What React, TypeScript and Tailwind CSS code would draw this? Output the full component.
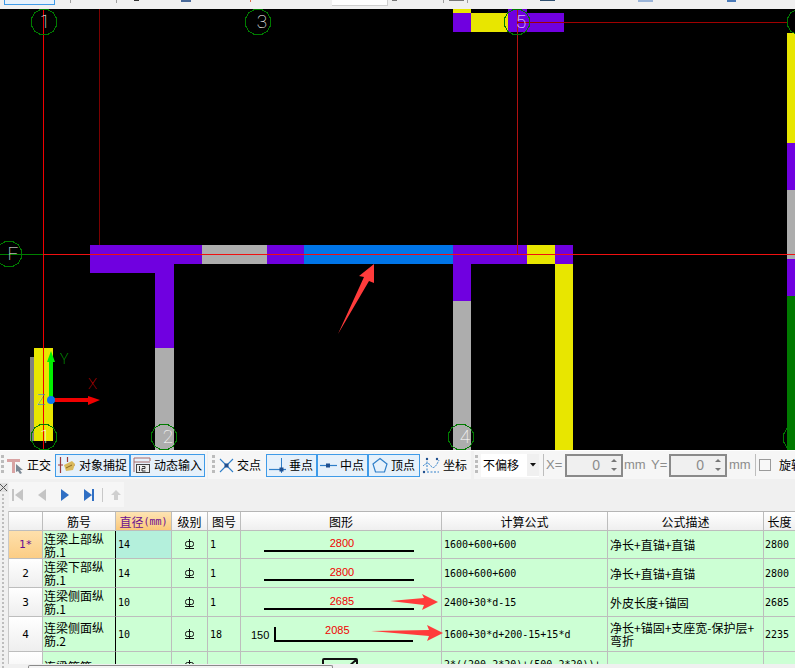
import type { ReactNode } from "react";

const cad = [
  // top beam piece
  [453, 9, 18, 4, "#e8e600"],
  [453, 13, 18, 19, "#7000e0"],
  [471, 13, 37, 19, "#e8e600"],
  [508, 13, 56, 19, "#7000e0"],
  [508, 9, 19, 4, "#7000e0"],
  // main beam
  [90, 245, 112, 19, "#7000e0"],
  [90, 264, 65, 9, "#7000e0"],
  [202, 245, 65, 19, "#adadad"],
  [267, 245, 37, 19, "#7000e0"],
  [304, 245, 149, 19, "#0075e8"],
  [453, 245, 74, 19, "#7000e0"],
  [527, 245, 28, 19, "#e8e600"],
  [555, 245, 18, 19, "#7000e0"],
  // columns
  [155, 264, 19, 84, "#7000e0"],
  [155, 348, 19, 102, "#adadad"],
  [453, 264, 18, 37, "#7000e0"],
  [453, 301, 18, 149, "#adadad"],
  [555, 264, 18, 186, "#e8e600"],
  [30, 357, 4, 84, "#808080"],
  [34, 348, 19, 93, "#e8e600"],
  // right edge
  [787, 33, 8, 110, "#e8e600"],
  [787, 143, 8, 47, "#7000e0"],
  [787, 190, 8, 69, "#adadad"],
  [787, 259, 8, 37, "#7000e0"],
  [787, 296, 8, 154, "#007a00"],
] as const;

const axes = [
  { x: 44, y: 22, label: "1" },
  { x: 258, y: 22, label: "3" },
  { x: 517, y: 22, label: "5" },
  { x: 800, y: 22, label: "" },
  { x: 9, y: 254, label: "F" },
  { x: 44, y: 437, label: "1" },
  { x: 164, y: 437, label: "2" },
  { x: 461, y: 437, label: "4" },
  { x: 796, y: 438, label: "" },
];

function ring(cx: number, cy: number) {
  const pts = [];
  for (let i = 0; i < 12; i++) {
    const a = ((i + 0.5) * Math.PI) / 6;
    pts.push(`${(cx + 13 * Math.cos(a)).toFixed(1)},${(cy + 13 * Math.sin(a)).toFixed(1)}`);
  }
  return pts.join(" ");
}

function CadView() {
  return (
    <svg viewBox="0 9 795 441" className="block w-[795px] h-[441px] bg-black shrink-0">
      <g shapeRendering="crispEdges">
        {cad.map(([x, y, w, h, fill], i) => (
          <rect key={i} x={x} y={y} width={w} height={h} fill={fill} />
        ))}
        <line x1="99.5" y1="9" x2="99.5" y2="245" stroke="#7a0000" />
        <line x1="517.5" y1="9" x2="517.5" y2="254" stroke="#b01010" />
        <line x1="517" y1="22.5" x2="787" y2="22.5" stroke="#a00000" />
        <line x1="43.5" y1="9" x2="43.5" y2="450" stroke="#f00000" />
        <line x1="0" y1="254.5" x2="43" y2="254.5" stroke="#008000" />
        <line x1="43" y1="254.5" x2="795" y2="254.5" stroke="#f01010" />
      </g>
      {axes.map((a) => (
        <g key={`${a.x}-${a.y}`}>
          <polygon points={ring(a.x, a.y)} fill="none" stroke="#007a00" shapeRendering="crispEdges" />
          <text x={a.x + (a.label === "1" ? 1 : 4)} y={a.y + 6} textAnchor="middle" fill="#fff" fontSize="19" className="font-['Roboto'] font-thin">
            {a.label}
          </text>
        </g>
      ))}
      {/* ucs */}
      <rect x="49" y="360" width="4" height="40" fill="#00f000" />
      <polygon points="51,351 55,362 47,362" fill="#00f000" />
      <rect x="51" y="398" width="40" height="4" fill="#f00000" />
      <polygon points="100,400 88,396 88,405" fill="#f00000" />
      <circle cx="51" cy="400" r="4" fill="#0a78f0" />
      <text x="37" y="405" fontSize="14" fill="#0a78f0" className="font-['Roboto'] font-thin">Z</text>
      <text x="60" y="364" fontSize="14" fill="#00f000" className="font-['Roboto'] font-thin">Y</text>
      <text x="88" y="389" fontSize="15" fill="#f00000" className="font-['Roboto'] font-thin">X</text>
      <polygon points="338,334 364,277 359,276 374,264 374,283 369,281" fill="#ff3b3b" />
    </svg>
  );
}

function Gripper() {
  return <div className="w-[3px] h-[20px] shrink-0 bg-[repeating-linear-gradient(to_bottom,#bcbcbc_0,#bcbcbc_3px,transparent_3px,transparent_5px)]" />;
}

function ToolBtn({ active, icon, label, className }: { active?: boolean; icon: ReactNode; label: string; className?: string }) {
  return (
    <div className={`flex items-center h-[23px] shrink-0 ${active ? "border border-[#3f9be8] bg-[#e6f1fb]" : ""} ${className ?? ""}`}>
      {icon}
      <span className="ml-[3px] whitespace-nowrap">{label}</span>
    </div>
  );
}

function Spinner({ className }: { className?: string }) {
  return (
    <div className={`flex items-center justify-end w-[58px] h-[23px] shrink-0 border-2 border-[#8a8a8a] bg-[#f0f0f0] ${className ?? ""}`}>
      <span className="font-['Liberation_Sans'] text-[14px] text-[#8c8c8c] mr-[10px]">0</span>
      <svg width="8" height="16" viewBox="0 0 8 16" className="mr-[3px]">
        <path d="M4 2 L7 5 L1 5 Z" fill="#777" />
        <path d="M4 14 L7 11 L1 11 Z" fill="#777" />
      </svg>
    </div>
  );
}

function Toolbar() {
  return (
    <div className="flex h-[30px] shrink-0 bg-[#f0f0f0] border-t border-white text-[12px] text-black">
      <div className="flex items-center w-[207px] h-[28px] bg-[#f6f6f6] shrink-0">
        <div className="ml-[1px]"><Gripper /></div>
        <ToolBtn
          className="ml-[3px] w-[47px]"
          label="正交"
          icon={
            <svg width="17" height="17" viewBox="0 0 17 17">
              <path d="M0 2 H13 V5 H8 V16 H5 V5 H0 Z" fill="#d8a3a3" />
              <path d="M9 7 L16 13 L13 13 L15 16 L13 17 L11 14 L9 15 Z" fill="#7c8894" />
            </svg>
          }
        />
        <ToolBtn
          className="ml-[1px] w-[75px] pl-[2px]"
          active
          label="对象捕捉"
          icon={
            <svg width="18" height="18" viewBox="0 0 18 18">
              <path d="M2.5 1 V17 M9.5 1 V6 M0 9 H5 M12 9 H17" stroke="#9a3a3a" strokeWidth="1.2" />
              <path d="M6 9 L14 5 L17 8 L15 14 L8 15 Z" fill="#d9b95c" />
              <path d="M8 12 L14 9" stroke="#8a6a20" />
            </svg>
          }
        />
        <ToolBtn
          className="w-[75px] pl-[2px]"
          active
          label="动态输入"
          icon={
            <svg width="18" height="18" viewBox="0 0 18 18">
              <path d="M1 2 H17 M1 2 V16 M17 2 V5 M1 6 H17" stroke="#a86a6a" fill="none" />
              <rect x="3.5" y="8.5" width="13" height="8" fill="#eee" stroke="#444" />
              <path d="M6.5 10 V15 M9 10.5 H12 V12.5 H9 V15 H12.5" stroke="#222" fill="none" strokeWidth="0.9" />
            </svg>
          }
        />
      </div>
      <div className="flex items-center w-[263px] h-[28px] ml-[1px] bg-[#f6f6f6] shrink-0">
        <div className="ml-[4px]"><Gripper /></div>
        <ToolBtn
          className="ml-[4px] w-[47px]"
          label="交点"
          icon={
            <svg width="15" height="15" viewBox="0 0 15 15">
              <path d="M1 1 L14 14 M14 1 L1 14" stroke="#2f7fc9" strokeWidth="1.1" />
              <rect x="5.5" y="5.5" width="4" height="4" fill="#1f4f8f" />
            </svg>
          }
        />
        <ToolBtn
          className="w-[51px] pl-[2px]"
          active
          label="垂点"
          icon={
            <svg width="17" height="17" viewBox="0 0 17 17">
              <path d="M0 12.5 H17" stroke="#2f7fc9" strokeWidth="1.2" />
              <path d="M12.5 1 V16" stroke="#2f7fc9" />
              <rect x="10.5" y="10.5" width="4" height="4" fill="#1f4f8f" />
            </svg>
          }
        />
        <ToolBtn
          className="w-[51px] pl-[2px]"
          active
          label="中点"
          icon={
            <svg width="17" height="17" viewBox="0 0 17 17">
              <path d="M0 8.5 H17" stroke="#2f7fc9" strokeWidth="1.2" />
              <rect x="6" y="6.5" width="4" height="4" fill="#1f4f8f" />
            </svg>
          }
        />
        <ToolBtn
          className="w-[52px] pl-[3px]"
          active
          label="顶点"
          icon={
            <svg width="16" height="16" viewBox="0 0 16 16">
              <path d="M8 1.5 L15 7 L12.5 15 H3.5 L1 7 Z" fill="none" stroke="#2f7fc9" strokeWidth="1.2" />
            </svg>
          }
        />
        <ToolBtn
          className="ml-[2px]"
          label="坐标"
          icon={
            <svg width="18" height="17" viewBox="0 0 18 17">
              <path d="M5 1 V15 H17" stroke="#2f7fc9" strokeDasharray="2 1.5" fill="none" />
              <path d="M1 9 Q6 4 9 9 T17 3" stroke="#2f7fc9" strokeDasharray="2 1" fill="none" />
              <circle cx="5" cy="2" r="1.2" fill="#1f4f8f" />
              <circle cx="15" cy="2" r="1.2" fill="#1f4f8f" />
              <circle cx="2" cy="15" r="1.2" fill="#1f4f8f" />
            </svg>
          }
        />
      </div>
      <div className="flex items-center flex-1 h-[28px] ml-[3px] bg-[#f6f6f6] min-w-0 overflow-hidden">
        <div className="ml-[1px]"><Gripper /></div>
        <div className="flex items-center justify-between w-[58px] h-[23px] ml-[3px] bg-white shrink-0">
          <span className="ml-[2px]">不偏移</span>
          <div className="flex items-center justify-center w-[12px] h-[22px] bg-[#f0f0f0]">
            <svg width="6" height="4" viewBox="0 0 6 4"><path d="M0 0 H6 L3 3.5 Z" fill="#111" /></svg>
          </div>
        </div>
        <div className="w-px h-[22px] ml-[4px] bg-[#bdbdbd] shrink-0" />
        <div className="flex items-center font-['Liberation_Sans'] text-[13px] text-[#8c8c8c] shrink-0">
          <span className="ml-[2px] w-[19px]">X=</span>
          <Spinner />
          <span className="ml-[1px] w-[27px]">mm</span>
          <span className="w-[18px]">Y=</span>
          <Spinner />
          <span className="ml-[2px] w-[26px]">mm</span>
        </div>
        <div className="w-px h-[22px] bg-[#bdbdbd] shrink-0" />
        <div className="w-[12px] h-[12px] ml-[3px] border border-[#9a9a9a] bg-[#f8f8f8] shrink-0" />
        <span className="ml-[8px] whitespace-nowrap">旋转</span>
      </div>
    </div>
  );
}

function NavBar() {
  return (
    <div className="flex items-center w-[115px] h-[25px] mt-[2px] ml-[1px] bg-[#f6f6f6]">
      <svg width="115" height="16" viewBox="0 0 115 16">
        <path d="M3 2 H5 V14 H3 Z M14 2 V14 L6 8 Z" fill="#c4c4c4" />
        <path d="M37 2 V14 L29 8 Z" fill="#c4c4c4" />
        <path d="M52 2 V14 L60 8 Z" fill="#2f6fc4" />
        <path d="M75 2 V14 L83 8 Z M83 2 H85 V14 H83 Z" fill="#2f6fc4" />
        <path d="M93.5 1 V15" stroke="#c8c8c8" />
        <path d="M107 3 L112 8 H109 V13 H105 V8 H102 Z" fill="#cfcfcf" />
      </svg>
    </div>
  );
}

const cols = "grid grid-cols-[34px_73px_56px_36px_33px_201px_166px_156px_32px] w-[787px]";
const cell = "flex items-center border-r border-b border-[#bdbdbd] overflow-hidden";
const mono = "font-['DejaVu_Sans_Mono'] text-[10px]";
const numFont = "font-['Liberation_Sans'] text-[11px]";

function Grade() {
  return (
    <svg width="9" height="11" viewBox="0 0 9 11">
      <rect x="0.5" y="2.5" width="8" height="5" rx="2" fill="none" stroke="#111" />
      <path d="M4.5 0 V10 M0 9.5 H9" stroke="#111" />
    </svg>
  );
}

function HeaderRow() {
  const items = ["", "筋号", "直径", "级别", "图号", "图形", "计算公式", "公式描述", "长度"];
  return (
    <div className={`${cols} h-[20px] border-t border-[#b5b5b5]`}>
      {items.map((t, i) => (
        <div
          key={i}
          className={`${cell} justify-center whitespace-nowrap ${
            i === 2 ? "bg-gradient-to-b from-[#fde4b4] to-[#fbc878] text-[#6a0f90]" : "bg-gradient-to-b from-white to-[#efefef] text-black"
          }`}
        >
          {t}
          {i === 2 && <span className={mono}>(mm)</span>}
        </div>
      ))}
    </div>
  );
}

function Bar({ value }: { value: string }) {
  return (
    <div className="flex flex-col items-center w-[150px] ml-[23px]">
      <span className={`${numFont} leading-[12px] text-[#f00000] ml-[6px]`}>{value}</span>
      <div className="w-[150px] h-[2px] mt-[1px] bg-black" />
    </div>
  );
}

const rows: { no: string; name: string; dia: string; fig: string; shape: ReactNode; formula: string; desc: ReactNode; len: string; h: string }[] = [
  { no: "1*", name: "连梁上部纵筋.1", dia: "14", fig: "1", shape: <Bar value="2800" />, formula: "1600+600+600", desc: "净长+直锚+直锚", len: "2800", h: "h-[28px]" },
  { no: "2", name: "连梁下部纵筋.1", dia: "14", fig: "1", shape: <Bar value="2800" />, formula: "1600+600+600", desc: "净长+直锚+直锚", len: "2800", h: "h-[29px]" },
  { no: "3", name: "连梁侧面纵筋.1", dia: "10", fig: "1", shape: <Bar value="2685" />, formula: "2400+30*d-15", desc: "外皮长度+锚固", len: "2685", h: "h-[29px]" },
  {
    no: "4",
    name: "连梁侧面纵筋.2",
    dia: "10",
    fig: "18",
    shape: (
      <div className="flex items-end ml-[10px]">
        <span className={`${numFont} leading-[12px] mr-[5px] mb-[1px]`}>150</span>
        <div className="flex flex-col items-center w-[139px] h-[15px] border-l-2 border-b-2 border-black">
          <span className={`${numFont} leading-[12px] text-[#f00000] -mt-[3px] mr-[15px]`}>2085</span>
        </div>
      </div>
    ),
    formula: "1600+30*d+200-15+15*d",
    desc: (
      <span>
        净长+锚固+支座宽-保护层+
        <br />
        弯折
      </span>
    ),
    len: "2235",
    h: "h-[35px]",
  },
];

function DataTable() {
  return (
    <div className="flex-1 min-h-0 overflow-hidden bg-[#ccffd4] border-l border-[#c8c8c8] w-[787px] text-[12px] leading-[13px] text-black">
      <HeaderRow />
      {rows.map((r, i) => (
        <div key={r.no} className={`${cols} ${r.h}`}>
          <div className={`${cell} justify-center font-['DejaVu_Sans_Mono'] text-[11px] ${i === 0 ? "bg-gradient-to-b from-[#fee0ac] to-[#fbcd85] text-[#6a0f90]" : "bg-gradient-to-b from-white to-[#eeeeee]"}`}>{r.no}</div>
          <div className="flex items-center pl-[1px] pr-[2px] border-r border-b border-r-black border-b-[#bdbdbd] overflow-hidden">{r.name}</div>
          <div className={`${cell} pl-[2px] ${mono} ${i === 0 ? "bg-[#b4f0dc]" : ""}`}>{r.dia}</div>
          <div className={`${cell} justify-center`}><Grade /></div>
          <div className={`${cell} pl-[2px] ${mono}`}>{r.fig}</div>
          <div className={cell}>{r.shape}</div>
          <div className={`${cell} pl-[2px] ${mono}`}>{r.formula}</div>
          <div className={`${cell} pl-[2px]`}>{r.desc}</div>
          <div className={`${cell} pl-[1px] ${mono}`}>{r.len}</div>
        </div>
      ))}
      {/* clipped by the scroll area */}
      <div className={`${cols} h-[30px]`}>
        <div className="border-r border-[#bdbdbd] bg-gradient-to-b from-white to-[#eeeeee]" />
        <div className="pt-[8px] pl-[1px] border-r border-black">连梁箍筋</div>
        <div className="border-r border-[#bdbdbd]" />
        <div className="flex justify-center pt-[8px] border-r border-[#bdbdbd]"><Grade /></div>
        <div className="border-r border-[#bdbdbd]" />
        <div className="pt-[6px] border-r border-[#bdbdbd]">
          <svg width="36" height="12" viewBox="0 0 36 12" className="ml-[81px]">
            <path d="M1 7 V2 Q1 1 2 1 H34 Q35 1 35 2 V10 M26 9 L34 2" fill="none" stroke="#111" strokeWidth="2" />
          </svg>
        </div>
        <div className={`pl-[2px] pt-[6px] border-r border-[#bdbdbd] ${mono} whitespace-nowrap`}>2*((200-2*20)+(500-2*20))+</div>
        <div className="border-r border-[#bdbdbd]" />
        <div />
      </div>
    </div>
  );
}

export default function App() {
  return (
    <div className="relative flex flex-col w-[795px] h-[668px] overflow-hidden bg-[#f0f0f0] font-['Noto_Sans_CJK_SC',sans-serif]">
      {/* bottom edge of the ribbon above */}
      <div className="flex h-[9px] shrink-0 items-start">
        <div className="w-[51px] h-[5px] ml-[4px] border-x border-b border-[#3f9be8] bg-[#e6f1fb]" />
        <div className="w-px h-[3px] ml-[15px] bg-[#a0a0a0]" />
        <div className="w-px h-[3px] ml-[45px] bg-[#a0a0a0]" />
        <div className="w-[5px] h-px ml-[17px] bg-[#333]" />
        <div className="w-[10px] h-[2px] ml-[42px] bg-[#4a6a9a]" />
        <div className="w-px h-[2px] ml-[59px] bg-[#e07050]" />
        <div className="w-[56px] h-[6px] ml-[81px] bg-white border-r border-b border-[#d0d0d0]" />
        <div className="w-[5px] h-px ml-[4px] bg-[#777]" />
        <div className="w-px h-[3px] ml-[46px] bg-[#a0a0a0]" />
        <div className="w-[15px] h-px ml-[5px] bg-[#777]" />
        <div className="w-px h-[3px] ml-[3px] bg-[#a0a0a0]" />
        <div className="w-[15px] h-px ml-[72px] bg-[#2f4f6f]" />
        <div className="w-[15px] h-[2px] ml-[83px] bg-[#9ab4d8]" />
        <div className="w-[9px] h-[2px] ml-[74px] bg-[#4a7ab8]" />
      </div>
      <CadView />
      <Toolbar />
      <div className="flex flex-1 min-h-0">
        <div className="flex flex-col items-start w-[8px] shrink-0">
          <svg width="8" height="9" viewBox="0 0 8 9" className="mt-[3px]">
            <rect width="8" height="9" fill="#e0e0e0" />
            <path d="M0 1 L7 8 M7 1 L0 8" stroke="#555" />
          </svg>
          <div className="flex-1 w-[2px] ml-[2px] mt-[2px] bg-[repeating-linear-gradient(to_bottom,#bdbdbd_0,#bdbdbd_2px,transparent_2px,transparent_4px)]" />
        </div>
        <div className="flex flex-col flex-1 min-w-0">
          <NavBar />
          <div className="h-[4px] shrink-0" />
          <DataTable />
          <div className="h-[4px] shrink-0 pl-[20px] bg-[#f0f0f0]">
            <div className="w-[305px] h-[4px] mt-px border-t border-x border-[#8a8a8a] rounded-t-[2px] bg-[#f4f4f4]" />
          </div>
        </div>
      </div>
      {/* annotation arrows over the table */}
      <svg width="795" height="668" viewBox="0 0 795 668" className="absolute left-0 top-0 pointer-events-none">
        <polygon points="390,601 424,598 422,594 438,602 422,610 424,605" fill="#ff3b3b" />
        <polygon points="371,631 429,630 427,625 443,633 427,641 429,636" fill="#ff3b3b" />
      </svg>
    </div>
  );
}
